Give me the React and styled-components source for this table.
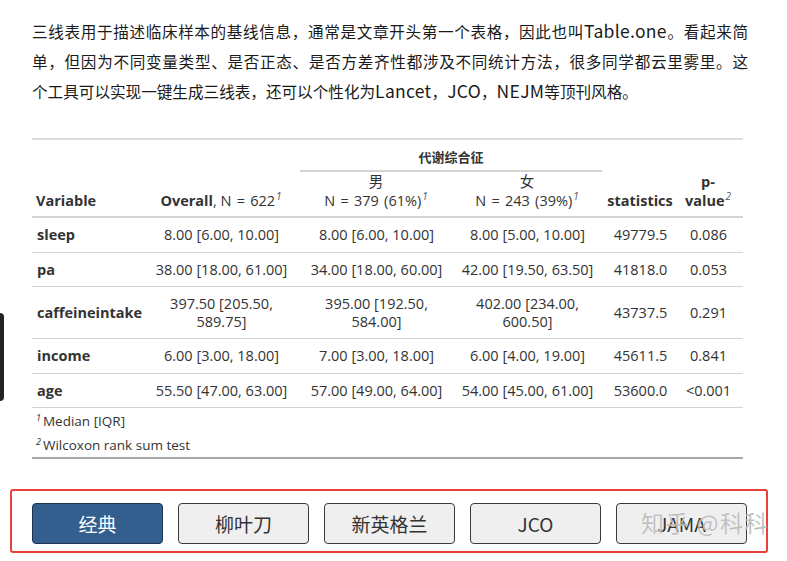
import React from "react";
import styled, { createGlobalStyle } from "styled-components";

const Global = createGlobalStyle`
  html, body { margin: 0; padding: 0; background: #fff; }
  body { font-family: "Open Sans", "Noto Sans CJK SC", sans-serif; }
`;

const Page = styled.div`
  position: relative;
  width: 787px;
  height: 561px;
  overflow: hidden;
  padding: 16px 0 0 32px;
  box-sizing: border-box;
`;

const Intro = styled.div`
  width: 716px;
  font-family: "Noto Sans CJK SC", "Noto Sans", sans-serif;
  font-size: 15.6px;
  line-height: 30px;
  color: #1a1a1a;
`;

const IntroLine = styled.div`
  white-space: nowrap;
  text-align: ${(p) => (p.$justify ? "justify" : "left")};
  text-align-last: ${(p) => (p.$justify ? "justify" : "left")};
`;

const Latin = styled.span`
  font-size: 17.5px;
  letter-spacing: 0.3px;
  line-height: 0;
`;

const TableWrap = styled.div`
  width: 711px;
  margin-top: 32px;
  border-top: 2px solid #dcdcdc;
  border-bottom: 2px solid #a8a8a8;
`;

const Table = styled.table`
  width: 711px;
  border-collapse: collapse;
  table-layout: fixed;
  font-family: "Open Sans", "Noto Sans CJK SC", sans-serif;
  font-size: 14.5px;
  color: #333;
`;

const Th = styled.th`
  font-weight: ${(p) => (p.$bold ? 700 : 400)};
  text-align: ${(p) => (p.$left ? "left" : "center")};
  vertical-align: bottom;
  padding: 0 ${(p) => (p.$last ? 9 : 4)}px 6px 4px;
  line-height: 19px;
  border-bottom: 2px solid #d3d3d3;
`;

const SpannerTh = styled.th`
  padding: 7px 0 0;
  font-family: "Noto Sans CJK SC", sans-serif;
  font-size: 13px;
  font-weight: 700;
  color: #333;
  line-height: 20px;
  border-bottom: none;
`;

const SpannerLabel = styled.div`
  padding-bottom: 3px;
  border-bottom: 2px solid #d3d3d3;
`;

const Sup = styled.sup`
  font-size: 10px;
  font-style: italic;
  font-weight: 400;
  color: #555;
  line-height: 0;
  margin-left: 1px;
`;

const HeadNum = styled.span`
  word-spacing: 1.5px;
`;

const Td = styled.td`
  text-align: ${(p) => (p.$left ? "left" : "center")};
  font-weight: ${(p) => (p.$bold ? 700 : 400)};
  padding: 8px ${(p) => (p.$last ? 9 : 4)}px 8px 5px;
  line-height: 17.5px;
  border-bottom: 1px solid #d3d3d3;
  vertical-align: middle;
  white-space: ${(p) => (p.$left ? "nowrap" : "normal")};
`;

const Notes = styled.div`
  font-family: "Open Sans", sans-serif;
  font-size: 13.5px;
  color: #333;
  padding: 0 5px 1px 4px;
`;

const Note = styled.div`
  height: 24px;
  line-height: 26px;
`;

const NoteMark = styled.sup`
  font-size: 9px;
  font-style: italic;
  margin-right: 2px;
  line-height: 0;
`;

const Annot = styled.div`
  margin: 30px 0 0 -22px;
  width: 758px;
  height: 64px;
  box-sizing: border-box;
  border: 2px solid #e8413a;
  border-radius: 3px;
  padding: 12px 0 0 20px;
  display: flex;
  gap: 15px;
`;

const StyleButton = styled.button`
  width: 131px;
  height: 41px;
  box-sizing: border-box;
  border-radius: 4px;
  border: 1px solid ${(p) => (p.$active ? "#1d3550" : "#3a3a3a")};
  background: ${(p) => (p.$active ? "#335f8f" : "#efefef")};
  color: ${(p) => (p.$active ? "#fff" : "#333")};
  font-family: "Noto Sans CJK SC", sans-serif;
  font-size: 19px;
  padding: 0;
  cursor: pointer;
`;

const Watermark = styled.div`
  position: absolute;
  left: 641px;
  top: 505px;
  font-family: "Noto Sans CJK SC", sans-serif;
  font-size: 23px;
  color: rgba(140, 140, 140, 0.55);
  text-shadow: 0 0 1px rgba(255, 255, 255, 0.9);
  letter-spacing: 1.5px;
  pointer-events: none;
`;

const EdgeTab = styled.div`
  position: absolute;
  left: -4px;
  top: 313px;
  width: 8px;
  height: 88px;
  border-radius: 4px;
  background: #222;
`;

const rows = [
  ["sleep", "8.00 [6.00, 10.00]", "8.00 [6.00, 10.00]", "8.00 [5.00, 10.00]", "49779.5", "0.086"],
  ["pa", "38.00 [18.00, 61.00]", "34.00 [18.00, 60.00]", "42.00 [19.50, 63.50]", "41818.0", "0.053"],
  ["caffeineintake", "397.50 [205.50, 589.75]", "395.00 [192.50, 584.00]", "402.00 [234.00, 600.50]", "43737.5", "0.291"],
  ["income", "6.00 [3.00, 18.00]", "7.00 [3.00, 18.00]", "6.00 [4.00, 19.00]", "45611.5", "0.841"],
  ["age", "55.50 [47.00, 63.00]", "57.00 [49.00, 64.00]", "54.00 [45.00, 61.00]", "53600.0", "<0.001"],
];

const styles = ["经典", "柳叶刀", "新英格兰", "JCO", "JAMA"];

export default function App() {
  return (
    <Page>
      <Global />
      <EdgeTab />
      <Intro>
        <IntroLine $justify>
          三线表用于描述临床样本的基线信息，通常是文章开头第一个表格，因此也叫<Latin>Table.one</Latin>。看起来简
        </IntroLine>
        <IntroLine $justify>
          单，但因为不同变量类型、是否正态、是否方差齐性都涉及不同统计方法，很多同学都云里雾里。这
        </IntroLine>
        <IntroLine>
          个工具可以实现一键生成三线表，还可以个性化为<Latin>Lancet</Latin>，<Latin>JCO</Latin>，<Latin>NEJM</Latin>等顶刊风格。
        </IntroLine>
      </Intro>
      <TableWrap>
        <Table>
          <colgroup>
            <col style={{ width: 110 }} />
            <col style={{ width: 158 }} />
            <col style={{ width: 152 }} />
            <col style={{ width: 150 }} />
            <col style={{ width: 76 }} />
            <col style={{ width: 65 }} />
          </colgroup>
          <thead>
            <tr>
              <Th rowSpan={2} $bold $left>Variable</Th>
              <Th rowSpan={2}>
                <b>Overall</b>, <HeadNum>N = 622</HeadNum><Sup>1</Sup>
              </Th>
              <SpannerTh colSpan={2}>
                <SpannerLabel>代谢综合征</SpannerLabel>
              </SpannerTh>
              <Th rowSpan={2} $bold>statistics</Th>
              <Th rowSpan={2} $bold $last>
                p-
                <br />
                value<Sup>2</Sup>
              </Th>
            </tr>
            <tr>
              <Th>
                男
                <br />
                <HeadNum>N = 379 (61%)</HeadNum><Sup>1</Sup>
              </Th>
              <Th>
                女
                <br />
                <HeadNum>N = 243 (39%)</HeadNum><Sup>1</Sup>
              </Th>
            </tr>
          </thead>
          <tbody>
            {rows.map((r) => (
              <tr key={r[0]}>
                <Td $left $bold>{r[0]}</Td>
                {r.slice(1).map((c, i) => (
                  <Td key={i} $last={i === 4}>{c}</Td>
                ))}
              </tr>
            ))}
          </tbody>
        </Table>
        <Notes>
          <Note>
            <NoteMark>1</NoteMark>Median [IQR]
          </Note>
          <Note>
            <NoteMark>2</NoteMark>Wilcoxon rank sum test
          </Note>
        </Notes>
      </TableWrap>
      <Annot>
        {styles.map((s, i) => (
          <StyleButton key={s} $active={i === 0}>
            {s}
          </StyleButton>
        ))}
      </Annot>
      <Watermark>知乎 @科科</Watermark>
    </Page>
  );
}
